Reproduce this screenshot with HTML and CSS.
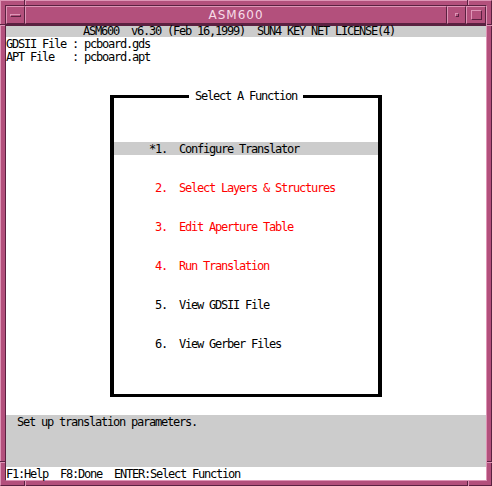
FILE: index.html
```html
<!DOCTYPE html>
<html>
<head>
<meta charset="utf-8">
<title>ASM600</title>
<link rel="stylesheet" href="styles.css">
</head>
<body>
<div class="window">
  <span class="tick tick-v tick-top tick-left"></span>
  <span class="tick tick-v tick-top tick-right"></span>
  <span class="tick tick-v tick-bottom tick-left"></span>
  <span class="tick tick-v tick-bottom tick-right"></span>
  <span class="tick tick-h tick-lside tick-upper"></span>
  <span class="tick tick-h tick-lside tick-lower"></span>
  <span class="tick tick-h tick-rside tick-upper"></span>
  <span class="tick tick-h tick-rside tick-lower"></span>
  <div class="frame">
    <div class="titlebar">
      <div class="tb-btn menu-btn"><span class="menu-bar"></span></div>
      <div class="title">ASM600</div>
      <div class="tb-btn min-btn"><span class="min-dot"></span></div>
      <div class="tb-btn max-btn"><span class="max-box"></span></div>
    </div>
    <div class="client mono">
      <div class="header line">ASM600  v6.30 (Feb 16,1999)  SUN4 KEY NET LICENSE(4)</div>
      <div class="files">
        <div class="line">GDSII File : pcboard.gds</div>
        <div class="line">APT File   : pcboard.apt</div>
      </div>
      <fieldset class="menu">
        <legend class="legend">Select A Function</legend>
        <ul class="items">
          <li class="item line selected">*1.  Configure Translator</li>
          <li class="item line red"> 2.  Select Layers &amp; Structures</li>
          <li class="item line red"> 3.  Edit Aperture Table</li>
          <li class="item line red"> 4.  Run Translation</li>
          <li class="item line"> 5.  View GDSII File</li>
          <li class="item line"> 6.  View Gerber Files</li>
        </ul>
      </fieldset>
      <div class="message"><div class="line">Set up translation parameters.</div></div>
      <div class="keys line">F1:Help  F8:Done  ENTER:Select Function</div>
    </div>
  </div>
</div>
</body>
</html>
```

FILE: styles.css
```css
html, body {
  margin: 0;
  padding: 0;
  background: #ffffff;
}

.window {
  position: relative;
  width: 492px;
  height: 486px;
  box-sizing: border-box;
  background: #b3507c;
  border-top: 1px solid #de95b6;
  border-left: 1px solid #de95b6;
  border-right: 1px solid #5b2141;
  border-bottom: 1px solid #5b2141;
  padding: 4px;
}

/* resize-corner marks on the window frame */
.tick {
  position: absolute;
  box-sizing: border-box;
}
.tick-v {
  width: 2px;
  height: 5px;
  border-left: 1px solid #5b2141;
  border-right: 1px solid #de95b6;
}
.tick-h {
  width: 5px;
  height: 2px;
  border-top: 1px solid #5b2141;
  border-bottom: 1px solid #de95b6;
}
.tick-top { top: -1px; }
.tick-bottom { bottom: -1px; }
.tick-left { left: 23px; }
.tick-right { left: 466px; }
.tick-lside { left: -1px; }
.tick-rside { right: -1px; }
.tick-upper { top: 23px; }
.tick-lower { top: 460px; }

.frame {
  height: 100%;
  box-sizing: border-box;
  border-top: 1px solid #5b2141;
  border-left: 1px solid #5b2141;
  border-right: 1px solid #de95b6;
  border-bottom: 1px solid #de95b6;
  display: flex;
  flex-direction: column;
}

.titlebar {
  height: 18px;
  display: flex;
  border-bottom: 2px solid #5b2141;
  flex: none;
}

.tb-btn {
  box-sizing: border-box;
  height: 18px;
  border-top: 1px solid #de95b6;
  border-left: 1px solid #de95b6;
  border-right: 1px solid #5b2141;
  border-bottom: 1px solid #5b2141;
  display: flex;
  align-items: center;
  justify-content: center;
  flex: none;
}

.menu-btn { width: 19px; }
.min-btn { width: 19px; }
.max-btn { width: 20px; }

.menu-bar {
  width: 11px;
  height: 3px;
  box-sizing: border-box;
  border-top: 1px solid #de95b6;
  border-left: 1px solid #de95b6;
  border-right: 1px solid #5b2141;
  border-bottom: 1px solid #5b2141;
  margin-top: 1px;
}

.min-dot {
  width: 4px;
  height: 4px;
  box-sizing: border-box;
  border-top: 1px solid #de95b6;
  border-left: 1px solid #de95b6;
  border-right: 1px solid #5b2141;
  border-bottom: 1px solid #5b2141;
}

.max-box {
  width: 11px;
  height: 10px;
  box-sizing: border-box;
  border-top: 1px solid #de95b6;
  border-left: 1px solid #de95b6;
  border-right: 1px solid #5b2141;
  border-bottom: 1px solid #5b2141;
}

.title {
  flex: 1;
  box-sizing: border-box;
  height: 18px;
  border-top: 1px solid #de95b6;
  border-left: 1px solid #de95b6;
  border-right: 1px solid #5b2141;
  border-bottom: 1px solid #5b2141;
  color: #f7dce8;
  font-family: "DejaVu Sans", sans-serif;
  font-size: 12px;
  letter-spacing: 1px;
  line-height: 16px;
  text-align: center;
}

.client {
  flex: 1;
  min-height: 0;
  background: #ffffff;
  display: flex;
  flex-direction: column;
}

.mono {
  font-family: "DejaVu Sans Mono", monospace;
  font-size: 12px;
  letter-spacing: -1.224px;
  line-height: 13px;
  color: #000000;
}

.line {
  white-space: pre;
  height: 12px;
  padding-top: 1px;
  line-height: 13px;
}

.header {
  height: 11px;
  padding-top: 0;
  line-height: 11px;
  background: #cccccc;
  padding-left: 77px;
}

.files {
  padding-left: 0;
}

.menu {
  margin: 27px 0 0 104px;
  width: 272px;
  box-sizing: border-box;
  border: 3px solid #000000;
  border-left-width: 4px;
  border-right-width: 4px;
  padding: 39px 0 44px 0;
  min-inline-size: 0;
}

.legend {
  white-space: pre;
  margin: 0 auto;
  padding: 0 6px;
  line-height: 13px;
}

.items {
  list-style: none;
  margin: 0;
  padding: 0;
  display: flex;
  flex-direction: column;
  gap: 26px;
}

.item {
  padding-left: 35px;
}

.item.selected {
  background: #cccccc;
}

.item.red {
  color: #ff0000;
}

.message {
  margin-top: 18px;
  height: 52px;
  background: #cccccc;
  padding-left: 11px;
}

.keys {
  flex: none;
}
```
